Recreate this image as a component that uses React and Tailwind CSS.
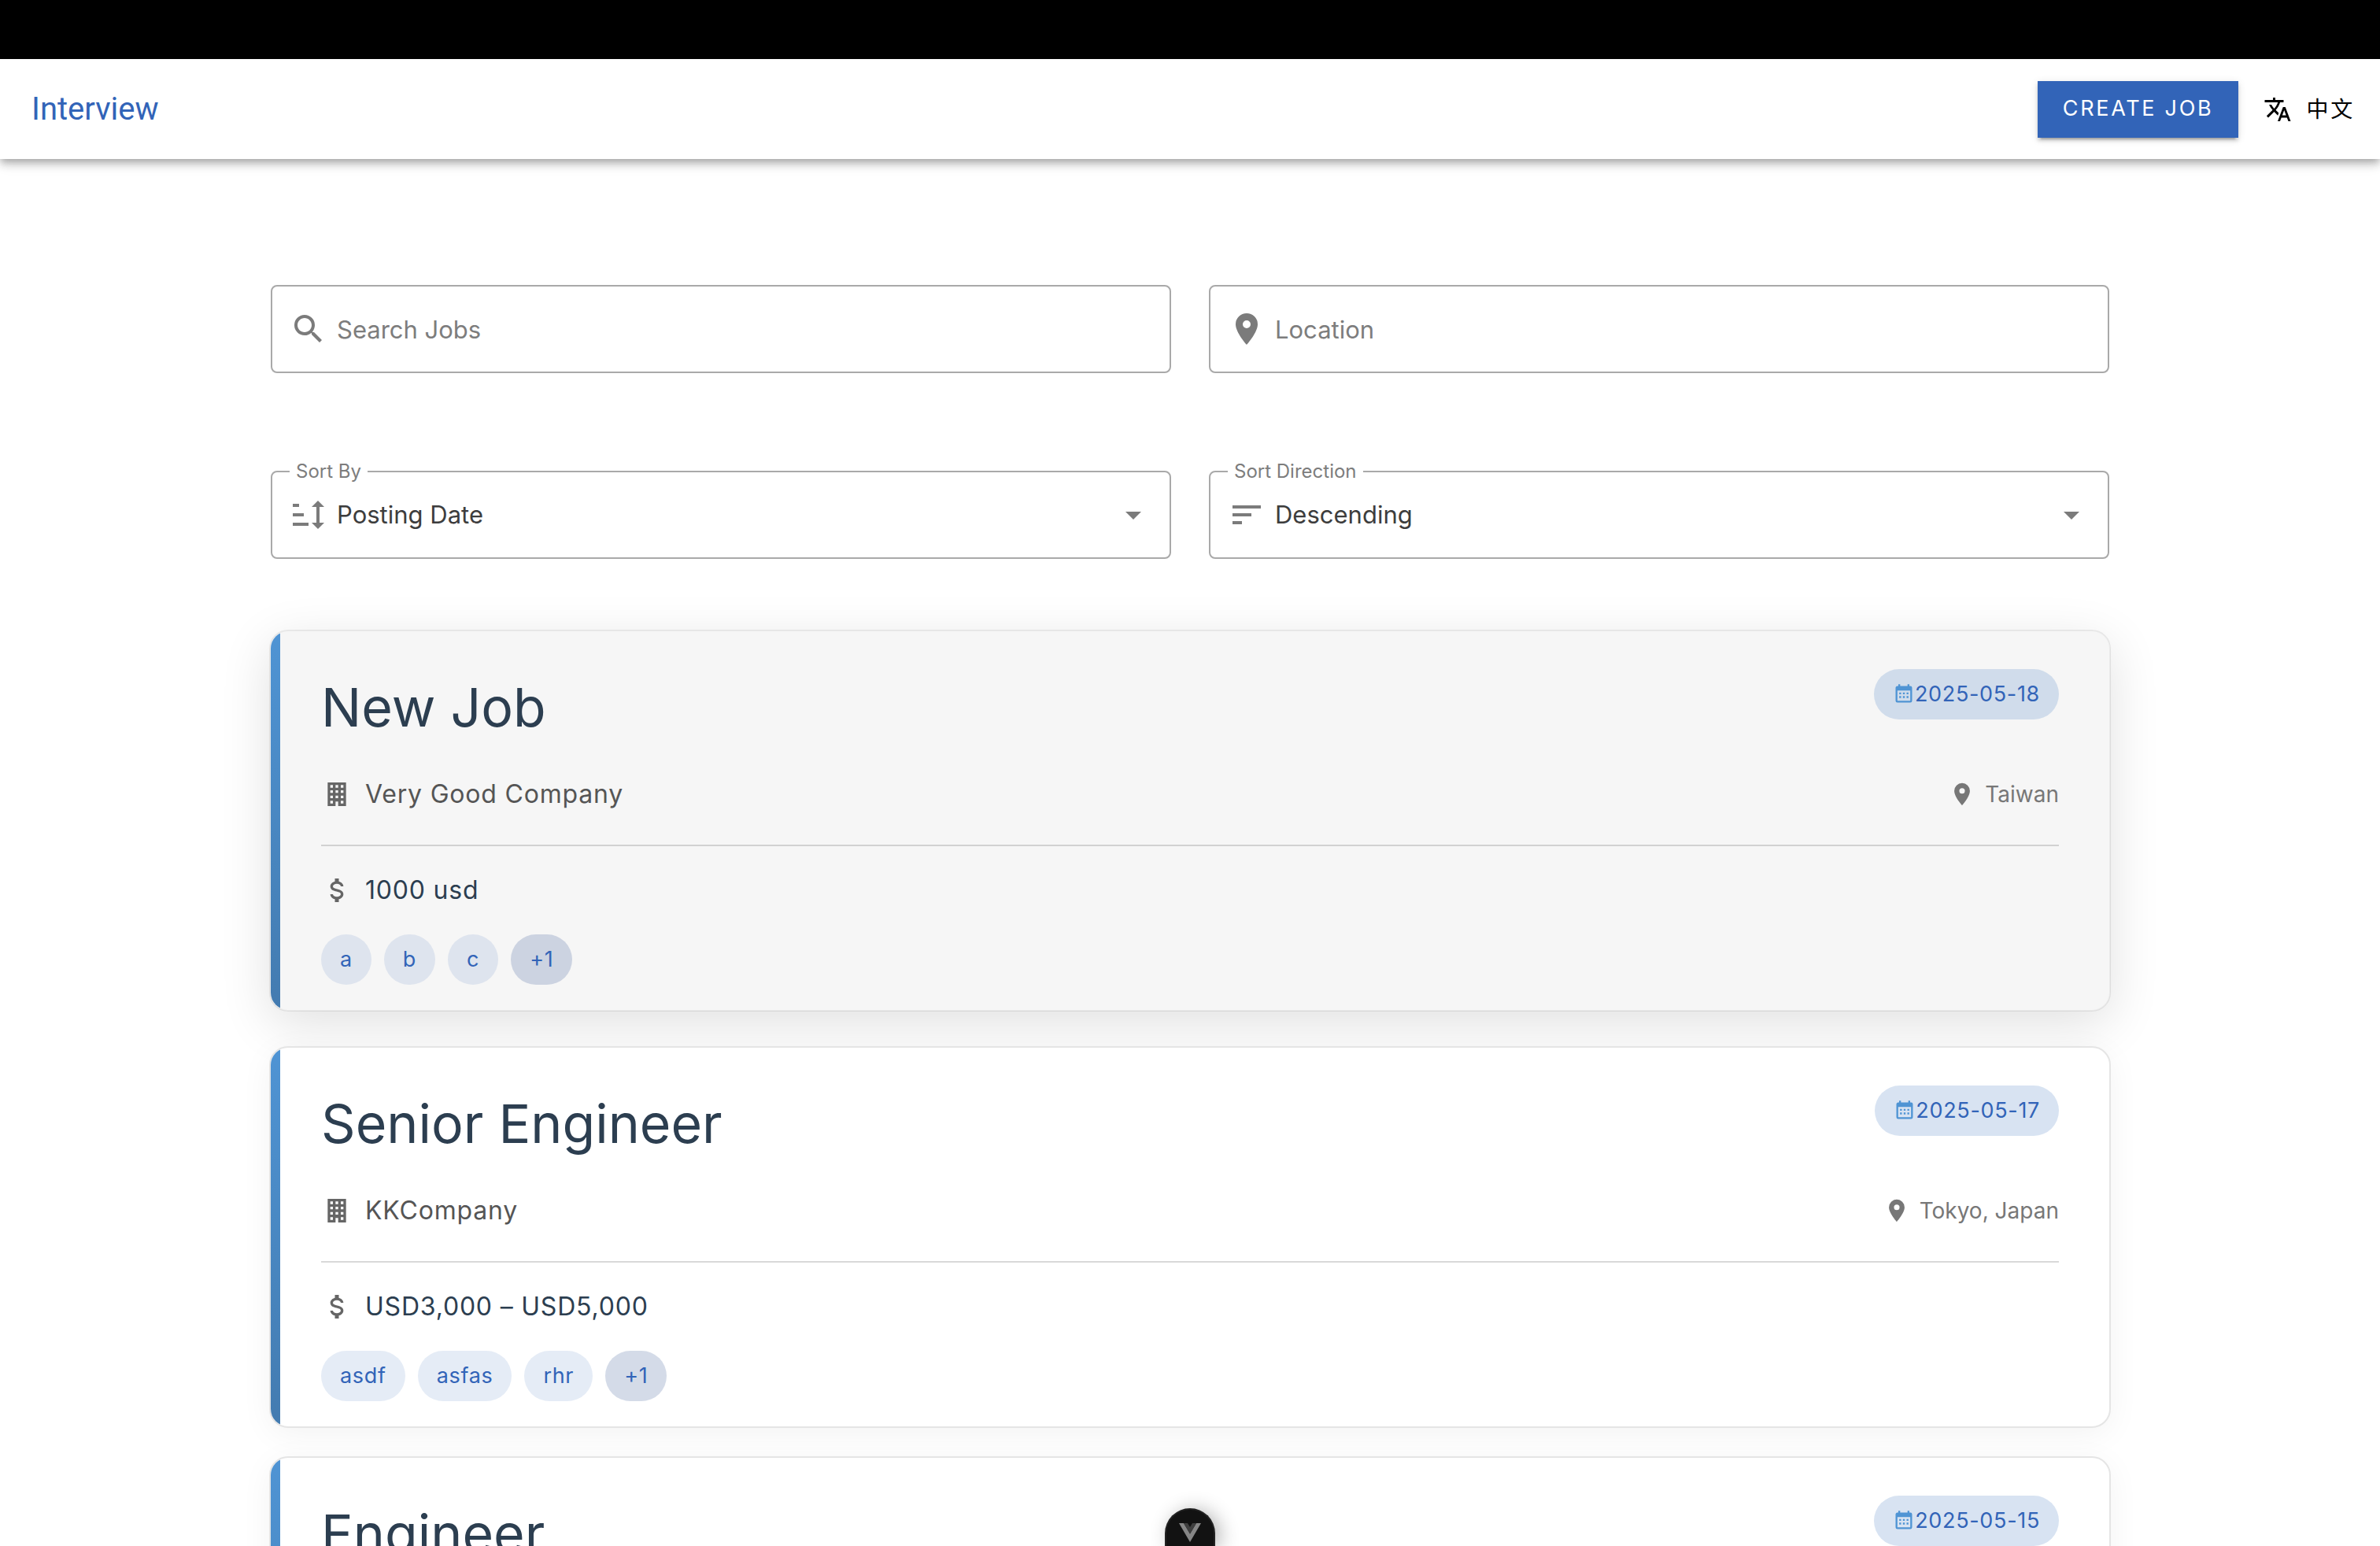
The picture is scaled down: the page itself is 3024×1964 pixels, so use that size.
const icons = {
  translate:
    'M12.87,15.07L10.33,12.56L10.36,12.53C12.1,10.59 13.34,8.36 14.07,6H17V4H10V2H8V4H1V6H12.17C11.5,7.92 10.44,9.75 9,11.35C8.07,10.32 7.3,9.19 6.69,8H4.69C5.42,9.63 6.42,11.17 7.67,12.56L2.58,17.58L4,19L9,14L12.11,17.11L12.87,15.07M18.5,10H16.5L12,22H14L15.12,19H19.87L21,22H23L18.5,10M15.88,17L17.5,12.67L19.12,17H15.88Z',
  magnify:
    'M9.5,3A6.5,6.5 0 0,1 16,9.5C16,11.11 15.41,12.59 14.44,13.73L14.71,14H15.5L20.5,19L19,20.5L14,15.5V14.71L13.73,14.44C12.59,15.41 11.11,16 9.5,16A6.5,6.5 0 0,1 3,9.5A6.5,6.5 0 0,1 9.5,3M9.5,5C7,5 5,7 5,9.5C5,12 7,14 9.5,14C12,14 14,12 14,9.5C14,7 12,5 9.5,5Z',
  marker:
    'M12,11.5A2.5,2.5 0 0,1 9.5,9A2.5,2.5 0 0,1 12,6.5A2.5,2.5 0 0,1 14.5,9A2.5,2.5 0 0,1 12,11.5M12,2A7,7 0 0,0 5,9C5,14.25 12,22 12,22C12,22 19,14.25 19,9A7,7 0 0,0 12,2Z',
  sort: 'M19,17H22L18,21L14,17H17V7H14L18,3L22,7H19V17M2,17H12V19H2V17M6,5V7H2V5H6M2,11H9V13H2V11Z',
  sortVariant: 'M3,13H15V11H3M3,6V8H21V6M3,18H9V16H3V18Z',
  menuDown: 'M7,10L12,15L17,10H7Z',
  building:
    'M5,3V21H11V17.5H13V21H19V3H5M7,5H9V7H7V5M11,5H13V7H11V5M15,5H17V7H15V5M7,9H9V11H7V9M11,9H13V11H11V9M15,9H17V11H15V9M7,13H9V15H7V13M11,13H13V15H11V13M15,13H17V15H15V13M7,17H9V19H7V17M15,17H17V19H15V17Z',
  dollar:
    'M7,15H9C9,16.08 10.37,17 12,17C13.63,17 15,16.08 15,15C15,13.9 13.96,13.5 11.76,12.97C9.64,12.44 7,11.78 7,9C7,7.21 8.47,5.69 10.5,5.18V3H13.5V5.18C15.53,5.69 17,7.21 17,9H15C15,7.92 13.63,7 12,7C10.37,7 9,7.92 9,9C9,10.1 10.04,10.5 12.24,11.03C14.36,11.56 17,12.22 17,15C17,16.79 15.53,18.31 13.5,18.82V21H10.5V18.82C8.47,18.31 7,16.79 7,15Z',
  calendar:
    'M9,10H7V12H9V10M13,10H11V12H13V10M17,10H15V12H17V10M19,3H18V1H16V3H8V1H6V3H5C3.89,3 3,3.9 3,5V19A2,2 0 0,0 5,21H19A2,2 0 0,0 21,19V5A2,2 0 0,0 19,3M19,19H5V8H19V19M9,14H7V16H9V14M13,14H11V16H13V14M17,14H15V16H17V14Z',
};

function Icon({ name, className }) {
  return (
    <svg viewBox="0 0 24 24" fill="currentColor" fillRule="evenodd" aria-hidden="true" className={`shrink-0 ${className}`}>
      <path d={icons[name]} />
    </svg>
  );
}

const jobs = [
  { title: 'New Job', date: '2025-05-18', company: 'Very Good Company', location: 'Taiwan', salary: '1000 usd', skills: ['a', 'b', 'c'], more: 1, active: true },
  { title: 'Senior Engineer', date: '2025-05-17', company: 'KKCompany', location: 'Tokyo, Japan', salary: 'USD3,000 – USD5,000', skills: ['asdf', 'asfas', 'rhr'], more: 1 },
  { title: 'Engineer', date: '2025-05-15' },
];

function TextBox({ id, icon, label }) {
  return (
    <div className="flex h-28 items-center gap-3 rounded-lg border-2 border-[#a9a9a9] px-[22px]">
      <Icon name={icon} className="size-12 text-[#7b7b7b]" />
      <input
        id={id}
        type="text"
        aria-label={label}
        placeholder={label}
        className="h-full min-w-0 flex-1 bg-transparent text-[31px] text-[#3d3d3d] outline-none placeholder:text-[#7d7d7d]"
      />
    </div>
  );
}

function SelectBox({ id, icon, label, options }) {
  return (
    <div className="relative flex h-28 items-center gap-3 rounded-lg border-2 border-[#a9a9a9] px-[22px]">
      <label htmlFor={id} className="absolute -top-4 left-[22px] bg-white px-2 text-[24px] leading-[30px] text-[#7d7d7d]">
        {label}
      </label>
      <Icon name={icon} className="size-12 text-[#7b7b7b]" />
      <select id={id} className="h-full min-w-0 flex-1 appearance-none bg-transparent text-[31px] text-[#3d3d3d] outline-none">
        {options.map((o) => (
          <option key={o}>{o}</option>
        ))}
      </select>
      <Icon name="menuDown" className="pointer-events-none size-12 text-[#7b7b7b]" />
    </div>
  );
}

function JobCard({ job }) {
  return (
    <article
      className={
        job.active
          ? 'relative -top-2 flex overflow-hidden rounded-3xl border-2 border-black/8 bg-[#f6f6f6] bg-clip-padding shadow-[0_16px_64px_rgba(0,0,0,0.12)]'
          : 'relative flex overflow-hidden rounded-3xl border-2 border-[#e5e5e5] bg-white shadow-[0_8px_40px_rgba(0,0,0,0.05)]'
      }
    >
      <div className="w-3 shrink-0 bg-linear-to-b from-[#4f94d4] to-[#437bb0]" />
      <div className="min-h-[480px] min-w-0 flex-1 pt-12 pr-16 pb-8 pl-[52px]">
        <div className="flex items-start justify-between">
          <h2 className="text-[68px] leading-[96px] text-[#2c3e50]">{job.title}</h2>
          <time
            dateTime={job.date}
            className={`flex h-16 items-center rounded-full px-6 text-[27px] tracking-wide text-[#3264b8] ${job.active ? 'bg-[#d0dceb]' : 'bg-[#d8e3f2]'}`}
          >
            <Icon name="calendar" className="size-7 text-[#4f94d4]" />
            {job.date}
          </time>
        </div>
        {job.company && (
          <>
            <div className="mt-[43px] flex h-10 items-center justify-between">
              <div className="flex items-center gap-4 text-[32px] tracking-wide text-[#555555]">
                <Icon name="building" className="size-10 text-[#666666]" />
                {job.company}
              </div>
              <div className="flex items-center gap-3 text-[28px] text-[#777777]">
                <Icon name="marker" className="size-[34px]" />
                {job.location}
              </div>
            </div>
            <hr className="mt-11 border-t-2 border-black/15" />
            <div className="mt-9 flex h-10 items-center gap-4 text-[32px] tracking-wide text-[#2c3e50]">
              <Icon name="dollar" className="size-10 text-[#666666]" />
              {job.salary}
            </div>
            <ul className="mt-9 flex gap-4 text-[27px] tracking-wide text-[#3264b8]">
              {job.skills.map((s) => (
                <li
                  key={s}
                  className={`flex h-16 items-center rounded-full px-6 ${job.active ? 'bg-[#dee4ee]' : 'bg-[#e5ecf6]'}`}
                >
                  {s}
                </li>
              ))}
              <li className={`flex h-16 items-center rounded-full px-6 ${job.active ? 'bg-[#ccd3e1]' : 'bg-[#d4dbe8]'}`}>
                +{job.more}
              </li>
            </ul>
          </>
        )}
      </div>
    </article>
  );
}

export default function App() {
  return (
    <div className="flex h-screen flex-col overflow-hidden bg-white font-['Inter','Noto_Sans_CJK_TC',sans-serif]">
      <div className="z-20 h-[75px] shrink-0 bg-black" />
      <header className="z-10 flex h-[127px] shrink-0 items-center justify-between bg-white pr-8 pl-10 shadow-[0_4px_8px_-2px_rgba(0,0,0,0.2),0_8px_10px_0_rgba(0,0,0,0.14),0_2px_20px_0_rgba(0,0,0,0.12)]">
        <a href="#" className="font-['Roboto',sans-serif] text-[40px] text-[#3264b8]">
          Interview
        </a>
        <div className="flex items-center gap-8">
          <button
            type="button"
            className="h-[72px] bg-[#3264b8] px-8 text-[27px] tracking-widest text-white shadow-[0_6px_2px_-4px_rgba(0,0,0,0.2),0_4px_4px_0_rgba(0,0,0,0.14),0_2px_10px_0_rgba(0,0,0,0.12)]"
          >
            CREATE JOB
          </button>
          <button type="button" className="flex items-center gap-[18px] text-[28px] tracking-widest text-black">
            <Icon name="translate" className="size-9" />
            中文
          </button>
        </div>
      </header>
      <main className="min-h-0 flex-1 overflow-y-auto [scrollbar-width:none]">
        <div className="mx-auto max-w-[2400px] px-8 pt-40">
          <form className="grid grid-cols-2 gap-x-12 gap-y-[124px]">
            <TextBox id="search" icon="magnify" label="Search Jobs" />
            <TextBox id="location" icon="marker" label="Location" />
            <SelectBox id="sort-by" icon="sort" label="Sort By" options={['Posting Date', 'Title']} />
            <SelectBox id="sort-direction" icon="sortVariant" label="Sort Direction" options={['Descending', 'Ascending']} />
          </form>
          <section className="-mx-0.5 mt-[98px] flex flex-col gap-9 pb-9">
            {jobs.map((job) => (
              <JobCard key={job.title} job={job} />
            ))}
          </section>
        </div>
      </main>
      <button
        type="button"
        aria-label="Toggle devtools"
        className="fixed bottom-0 left-1/2 z-30 flex h-12 w-16 -translate-x-1/2 justify-center rounded-t-full border-2 border-b-0 border-[#222222] bg-[#121212] pt-[17px] shadow-[6px_2px_24px_rgba(0,0,0,0.3)]"
      >
        <svg viewBox="0 0 28 24" aria-hidden="true" className="h-6 w-7">
          <path d="M0,0H6L14,13.5L22,0H28L14,24Z" fill="#868686" />
          <path d="M6,0H11L14,5L17,0H22L14,13.5Z" fill="#3f3f3f" />
        </svg>
      </button>
    </div>
  );
}
